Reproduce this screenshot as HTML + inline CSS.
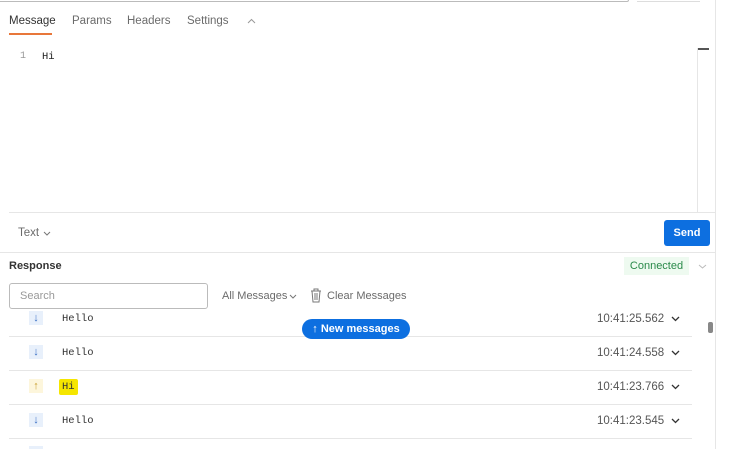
<!DOCTYPE html>
<html><head><style>
body{margin:0;width:740px;height:449px;background:#fff;font-family:"Liberation Sans",sans-serif;position:relative;overflow:hidden;color:#212121}
.a{position:absolute}
.tab{font-size:11.5px;color:#6b6b6b;top:15px}
.mono{font-family:"Liberation Mono",monospace;font-size:10.5px;color:#333}
.row{position:absolute;left:9px;width:683px;height:34px;border-bottom:1px solid #e6e6e6}
.ic{position:absolute;left:20px;top:9px;width:14px;height:14px;background:#e8f0fb;color:#3a6fc4;font-size:11px;text-align:center;line-height:14px}
.msg{position:absolute;left:53px;top:11px}
.ts{position:absolute;left:588px;top:11px;font-size:11.5px;color:#555}
.chev{position:absolute;left:662px;top:14px}
</style></head><body>
<div class="a" style="left:0;top:0;width:628px;height:1px;border-bottom:1px solid #bbb;border-right:1px solid #bbb;border-radius:0 0 3px 0"></div>
<div class="a" style="left:637px;top:0;width:63px;height:1px;border-bottom:1px solid #ddd"></div>
<div class="a" style="left:715px;top:0;width:1px;height:449px;background:#e6e6e6"></div>
<div class="a tab" style="left:9px;color:#333">Message</div>
<div class="a" style="left:9px;top:33px;width:43px;height:2px;background:#e8773a"></div>
<div class="a tab" style="left:72px">Params</div>
<div class="a tab" style="left:127px">Headers</div>
<div class="a tab" style="left:187px">Settings</div>
<svg class="a" style="left:247px;top:18px" width="9" height="6"><path d="M1 5l3.5-3.5L8 5" fill="none" stroke="#999" stroke-width="1"/></svg>
<div class="a" style="left:20px;top:51px;font-size:10px;color:#999;font-family:'Liberation Mono',monospace">1</div>
<div class="a mono" style="left:42px;top:51px;color:#222">Hi</div>
<div class="a" style="left:697px;top:48px;width:1px;height:164px;background:#e6e6e6"></div>
<div class="a" style="left:698px;top:48px;width:11px;height:2px;background:#555"></div>
<div class="a" style="left:9px;top:212px;width:706px;height:1px;background:#e6e6e6"></div>
<div class="a" style="left:18px;top:227px;font-size:11.5px;color:#6b6b6b">Text</div>
<svg class="a" style="left:43px;top:231px" width="8" height="5"><path d="M1 1l3 3 3-3" fill="none" stroke="#777" stroke-width="1"/></svg>
<div class="a" style="left:664px;top:220px;width:46px;height:26px;background:#0d6fe0;border-radius:3px;color:#fff;font-size:11px;font-weight:bold;text-align:center;line-height:26px">Send</div>
<div class="a" style="left:0;top:252px;width:715px;height:1px;background:#e6e6e6"></div>
<div class="a" style="left:9px;top:260px;font-size:11px;font-weight:bold;color:#333">Response</div>
<div class="a" style="left:624px;top:257px;width:65px;height:18px;background:#eefaf0;color:#2a8a4a;font-size:11px;text-align:center;line-height:18px">Connected</div>
<svg class="a" style="left:698px;top:264px" width="9" height="5"><path d="M1 1l3.5 3L8 1" fill="none" stroke="#bbb" stroke-width="1"/></svg>
<div class="a" style="left:9px;top:283px;width:197px;height:24px;border:1px solid #bbb;border-radius:3px"></div>
<div class="a" style="left:20px;top:290px;font-size:11px;color:#999">Search</div>
<div class="a" style="left:222px;top:290px;font-size:11px;color:#6b6b6b">All Messages</div>
<svg class="a" style="left:289px;top:294px" width="8" height="5"><path d="M1 1l3 3 3-3" fill="none" stroke="#777" stroke-width="1"/></svg>
<svg class="a" style="left:310px;top:288px" width="12" height="15" viewBox="0 0 12 15"><path d="M1 3h10M4 3V1h4v2M2 3l1 11h6l1-11M5 5v7M7 5v7" fill="none" stroke="#777" stroke-width="1"/></svg>
<div class="a" style="left:327px;top:290px;font-size:11px;color:#6b6b6b">Clear Messages</div>
<div class="row" style="top:302px"><div class="ic" style="top:9px">&#8595;</div><div class="msg mono">Hello</div><div class="ts">10:41:25.562</div><svg class="chev" width="9" height="6"><path d="M1 1l3.5 3.5L8 1" fill="none" stroke="#333" stroke-width="1.3"/></svg></div>
<div class="row" style="top:336px"><div class="ic">&#8595;</div><div class="msg mono">Hello</div><div class="ts">10:41:24.558</div><svg class="chev" width="9" height="6"><path d="M1 1l3.5 3.5L8 1" fill="none" stroke="#333" stroke-width="1.3"/></svg></div>
<div class="row" style="top:370px"><div class="ic" style="background:#fdf6dc;color:#c9a030">&#8593;</div><div class="msg mono" style="background:#f5e600;padding:2px 3px;margin-left:-3px;top:9px;border-radius:2px">Hi</div><div class="ts">10:41:23.766</div><svg class="chev" width="9" height="6"><path d="M1 1l3.5 3.5L8 1" fill="none" stroke="#333" stroke-width="1.3"/></svg></div>
<div class="row" style="top:404px"><div class="ic">&#8595;</div><div class="msg mono">Hello</div><div class="ts">10:41:23.545</div><svg class="chev" width="9" height="6"><path d="M1 1l3.5 3.5L8 1" fill="none" stroke="#333" stroke-width="1.3"/></svg></div>
<div class="a" style="left:29px;top:446px;width:14px;height:3px;background:#e8f0fb"></div>
<div class="a" style="left:302px;top:319px;width:108px;height:20px;background:#0d6fe0;border-radius:10px;color:#fff;font-size:11px;font-weight:bold;text-align:center;line-height:20px">&#8593; New messages</div>
<div class="a" style="left:708px;top:322px;width:5px;height:11px;background:#888;border-radius:2px"></div>
</body></html>
